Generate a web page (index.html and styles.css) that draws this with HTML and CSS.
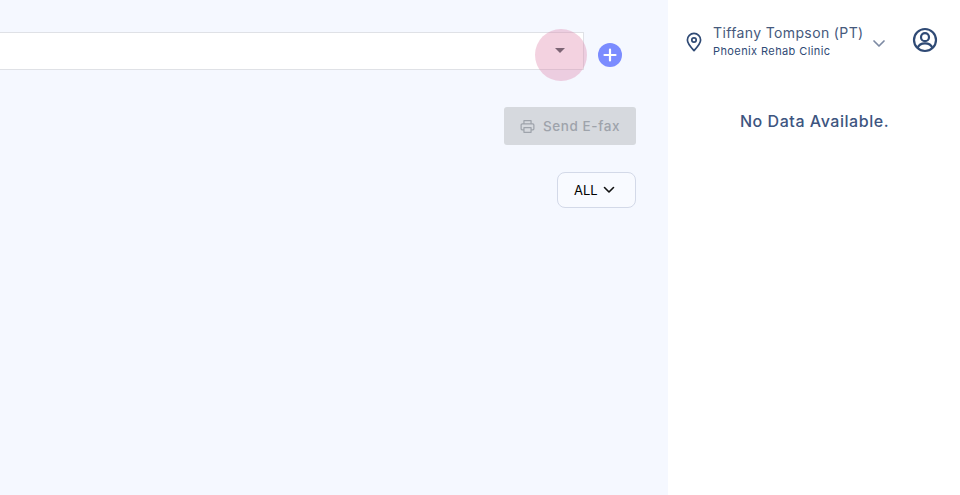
FILE: index.html
```html
<!DOCTYPE html>
<html lang="en">
<head>
    <meta charset="UTF-8">
    <meta name="viewport" content="width=device-width, initial-scale=1.0">
    <title>E-fax</title>
    <link rel="stylesheet" href="styles.css">
</head>
<body>
    <div class="page">
        <main class="main">
            <div class="select-row">
                <div class="select-box">
                    <span class="ripple"></span>
                    <span class="caret"></span>
                </div>
                <button class="add-btn" aria-label="Add">
                    <svg width="14" height="14" viewBox="0 0 14 14"><path d="M7 1.500v11M1.500 7h11" stroke="#fff" stroke-width="2.2" stroke-linecap="round" fill="none"/></svg>
                </button>
            </div>
            <div class="fax-row">
                <button class="fax-btn" disabled>
                    <svg width="15" height="15" viewBox="0 0 16 16" fill="none" stroke="#9ea3ab" stroke-width="1.3" stroke-linejoin="round"><path d="M4.200 5.200V1.800h7.600v3.400"/><path d="M4.200 11.500H2.200a1 1 0 0 1-1-1V6.400a1.200 1.200 0 0 1 1.200-1.200h11.200a1.200 1.200 0 0 1 1.200 1.200v4.100a1 1 0 0 1-1 1h-2"/><path d="M4.200 9.200h7.600v5H4.200z"/></svg>
                    <span>Send E-fax</span>
                </button>
            </div>
            <div class="filter-row">
                <button class="filter-btn">
                    <span>ALL</span>
                    <svg width="12" height="8" viewBox="0 0 12 8" fill="none" stroke="#111" stroke-width="1.6" stroke-linecap="round" stroke-linejoin="round"><path d="M1.500 1.500 6 6l4.500-4.500"/></svg>
                </button>
            </div>
        </main>
        <aside class="side">
            <div class="user-row">
                <svg class="pin" width="18" height="20" viewBox="0 0 18 20" fill="none" stroke="#2f4a75" stroke-width="1.7"><path d="M9 18.600C5.600 14.900 2.400 11.600 2.400 8a6.600 6.600 0 0 1 13.200 0c0 3.600-3.200 6.900-6.600 10.600z" stroke-linejoin="round"/><circle cx="9" cy="8" r="2.200"/></svg>
                <div class="user-info">
                    <div class="user-name">Tiffany Tompson (PT)</div>
                    <div class="user-clinic">Phoenix Rehab Clinic</div>
                </div>
                <svg class="chev" width="14" height="9" viewBox="0 0 14 9" fill="none" stroke="#7d8aa3" stroke-width="1.7" stroke-linecap="round" stroke-linejoin="round"><path d="M2 2l5 5 5-5"/></svg>
                <svg class="avatar" width="26" height="26" viewBox="0 0 26 26" fill="none" stroke="#2f4a75" stroke-width="2.200"><circle cx="13" cy="13" r="11"/><circle cx="13" cy="10.200" r="4"/><path d="M5.600 21c1.200-3.400 4-4.600 7.400-4.600s6.200 1.200 7.400 4.600"/></svg>
            </div>
            <p class="no-data">No Data Available.</p>
        </aside>
    </div>
</body>
</html>
```

FILE: styles.css
```css
* {
    box-sizing: border-box;
}
body {
    margin: 0;
    font-family: "Inter", "Open Sans", sans-serif;
    background: #fff;
}
button {
    font-family: inherit;
}
.page {
    display: flex;
    height: 495px;
    overflow: hidden;
}

/* left side */
.main {
    flex: none;
    width: 668px;
    background: #f5f8ff;
    padding: 32px 32px 0 0;
}
.select-row {
    display: flex;
    align-items: flex-start;
}
.select-box {
    position: relative;
    width: 584px;
    height: 38px;
    background: #fff;
    border: 1px solid #dfe1e6;
    border-left: none;
    display: flex;
    align-items: center;
    justify-content: flex-end;
    padding-right: 18px;
}
.caret {
    position: relative;
    width: 0;
    height: 0;
    margin-top: -1px;
    border-left: 5px solid transparent;
    border-right: 5px solid transparent;
    border-top: 5px solid #7c6474;
}
.ripple {
    position: absolute;
    top: -4px;
    right: -4px;
    width: 52px;
    height: 52px;
    border-radius: 50%;
    background: rgba(222, 130, 170, 0.36);
}
.add-btn {
    width: 24px;
    height: 24px;
    margin: 11px 0 0 14px;
    padding: 0;
    border: none;
    border-radius: 50%;
    background: #7b8cff;
    display: flex;
    align-items: center;
    justify-content: center;
}
.fax-row,
.filter-row {
    display: flex;
    justify-content: flex-end;
}
.fax-row {
    margin-top: 37px;
}
.fax-btn {
    width: 132px;
    height: 38px;
    border: none;
    border-radius: 3px;
    background: #d6d9de;
    color: #9ea3ab;
    font-size: 13.5px;
    font-weight: 500;
    letter-spacing: 0.6px;
    display: flex;
    align-items: center;
    justify-content: center;
    gap: 8px;
}
.filter-row {
    margin-top: 27px;
}
.filter-btn {
    width: 79px;
    height: 36px;
    border: 1px solid #d3d9e8;
    border-radius: 8px;
    background: #f8faff;
    color: #000;
    font-size: 13px;
    display: flex;
    align-items: center;
    justify-content: flex-start;
    padding-left: 16px;
    gap: 5px;
}

/* right side */
.side {
    flex: 1;
    min-width: 0;
    background: #fff;
    padding: 23px 21px 0 17px;
}
.user-row {
    display: flex;
    align-items: center;
}
.pin {
    flex: none;
    margin-top: 2px;
}
.user-info {
    margin-left: 10px;
    width: 160px;
}
.user-name {
    font-size: 14px;
    line-height: 20px;
    letter-spacing: 0.37px;
    color: #45597c;
    white-space: nowrap;
}
.user-clinic {
    font-size: 11px;
    line-height: 16px;
    letter-spacing: 0.4px;
    color: #2f4a75;
    white-space: nowrap;
}
.chev {
    flex: none;
    margin: 4px 0 0 -1px;
}
.avatar {
    flex: none;
    margin-left: 26px;
    margin-top: -2px;
}
.no-data {
    margin: 50px 0 0;
    padding-left: 5px;
    text-align: center;
    font-size: 16px;
    line-height: 24px;
    font-weight: 500;
    letter-spacing: 0.55px;
    color: #3d5580;
}
```
